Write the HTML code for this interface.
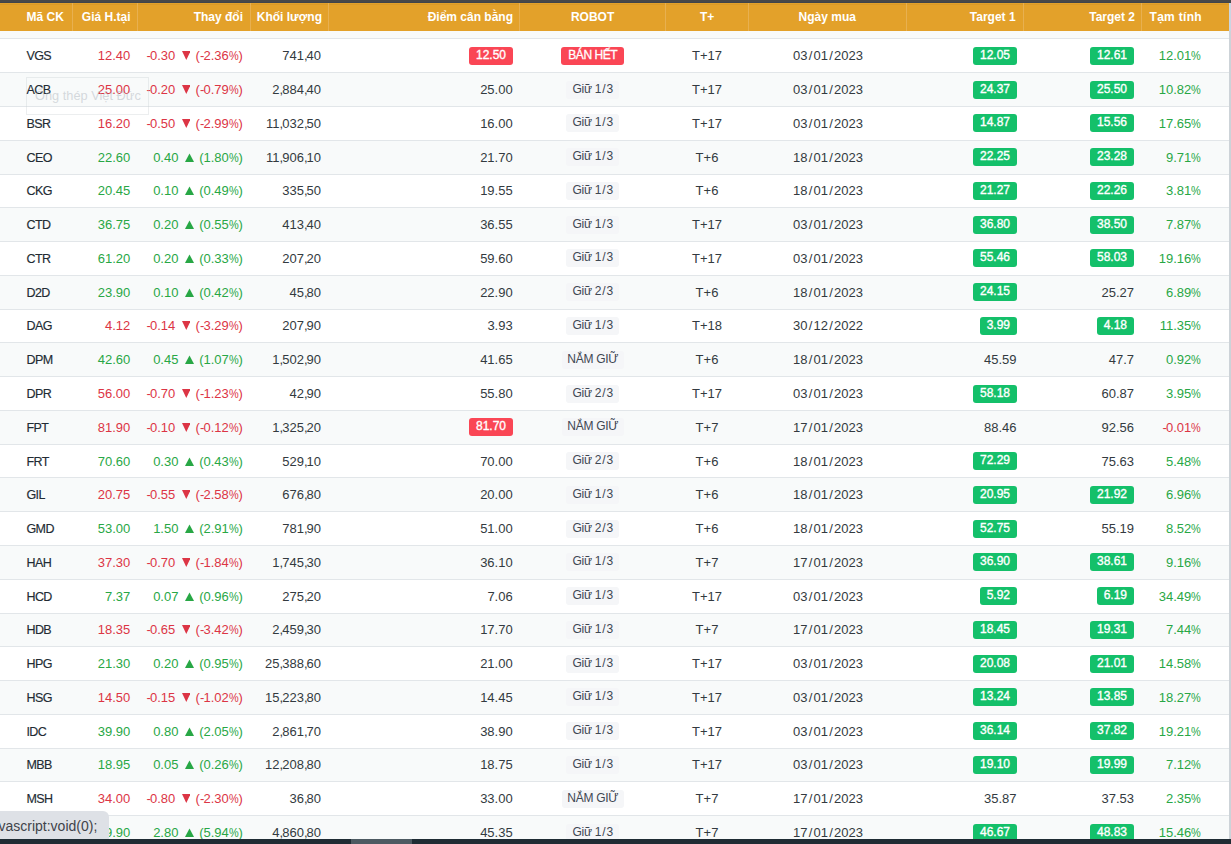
<!DOCTYPE html><html><head><meta charset="utf-8"><style>
*{margin:0;padding:0;box-sizing:border-box}
html,body{width:1231px;height:844px;overflow:hidden;background:#fff}
body{position:relative;font-family:"Liberation Sans",sans-serif;font-size:13px;color:#333a40}
.topbar{position:absolute;left:0;top:0;width:1231px;height:3px;background:#484848;border-bottom:1px solid #40444a}
.hline{position:absolute;left:0;top:1px;width:1229px;height:1px;background:#da9a28}
.hdr{position:absolute;left:0;top:3px;width:1229px;height:28px;background:#e3a12a}
.sep{position:absolute;top:0;width:1px;height:28px;background:#e8b050}
.h{position:absolute;top:0;height:28px;line-height:28px;color:#fff;font-weight:bold;font-size:12px;white-space:nowrap}
.band{position:absolute;left:0;top:31px;width:1229px;height:7px;background:#f8fafa}
.vscroll{position:absolute;left:1229px;top:31px;width:2px;height:808px;background:#cdd3d8}
.vs2{position:absolute;left:1229px;top:3px;width:2px;height:28px;background:#c9d5e1}
.row{position:absolute;left:0;width:1229px;border-top:1px solid #e2e6e9}
.row.alt{background:#f8fafa}
.c{position:absolute;white-space:nowrap;line-height:16px}
.r{color:#dc3545} .g{color:#28a745}
.code{color:#222b33;font-size:12.5px;letter-spacing:-0.6px;-webkit-text-stroke:0.15px #222b33}
.pc{display:inline-block;transform:scaleX(0.84);transform-origin:0 0;margin-right:-1.9px} .sl{margin:0 1.2px} .cm{letter-spacing:-1px} .hy{letter-spacing:-0.8px}
.tri{display:inline-block;margin:0 5.5px 0 6.2px;vertical-align:baseline;position:relative;top:0px}
.badge{position:absolute;height:18px;line-height:16px;border-radius:3px;color:#fff;font-size:12px;text-align:center;white-space:nowrap}
.nb{position:absolute;height:18px;line-height:16px;border-radius:3px;color:#fff;font-size:12px;white-space:nowrap;padding:0 7px;-webkit-text-stroke:0.35px #fff}
.nbw{position:absolute;width:200px;height:18px;text-align:right}
.nbw .nb{position:relative;display:inline-block}
.br{background:#fa4655} .bg{background:#14c06a}
.bgray{background:#f5f6f8;color:#3e4752;font-size:12px;letter-spacing:-0.3px;text-indent:0.3px}
.bottombar{position:absolute;left:0;top:839px;width:1231px;height:5px;background:#1f2c34}
.thumb{position:absolute;left:351px;top:0;width:61px;height:5px;background:#4d5a62}
.status{position:absolute;left:0;top:811px;width:109px;height:28px;background:#dee1e6;border-top-right-radius:6px;font-size:14px;color:#3e434a;line-height:30px;overflow:hidden;white-space:nowrap}
.tip{position:absolute;left:26px;top:77px;width:123px;height:38px;border:1px solid rgba(200,205,210,0.35);background:transparent;color:rgba(175,182,190,0.5);font-size:12.8px;line-height:36px;padding-left:8px;white-space:nowrap}
</style></head><body><div class="topbar"></div><div class="hdr"><div class="hline"></div><div class="sep" style="left:72px"></div><div class="sep" style="left:137px"></div><div class="sep" style="left:250px"></div><div class="sep" style="left:328px"></div><div class="sep" style="left:519px"></div><div class="sep" style="left:665px"></div><div class="sep" style="left:748px"></div><div class="sep" style="left:906px"></div><div class="sep" style="left:1023px"></div><div class="sep" style="left:1141px"></div><div class="h" style="left:26.5px">Mã CK</div><div class="h" style="left:-69.5px;width:200px;text-align:right">Giá H.tại</div><div class="h" style="left:43px;width:200px;text-align:right">Thay đổi</div><div class="h" style="left:122px;width:200px;text-align:right">Khối lượng</div><div class="h" style="left:313px;width:200px;text-align:right">Điểm cân bằng</div><div class="h" style="left:492.6px;width:200px;text-align:center">ROBOT</div><div class="h" style="left:607.2px;width:200px;text-align:center">T+</div><div class="h" style="left:727.3px;width:200px;text-align:center">Ngày mua</div><div class="h" style="left:815.6px;width:200px;text-align:right">Target 1</div><div class="h" style="left:935px;width:200px;text-align:right">Target 2</div><div class="h" style="left:1149.5px"><span style="letter-spacing:0.3px">Tạm tính</span></div></div><div class="band"></div><div class="row" style="top:38px;height:34px"><div class="c code" style="left:26.5px;top:9px">VGS</div><div class="c r" style="left:-69.69999999999999px;top:9px;width:200px;text-align:right">12.40</div><div class="c r" style="left:42.80000000000001px;top:9px;width:200px;text-align:right"><span class="hy">-</span>0.30<svg class="tri" width="8.6" height="9" viewBox="0 0 8.6 9"><polygon points="0,0 8.6,0 4.3,8.9" fill="#dc3545"/></svg>(<span class="hy">-</span>2.36<span class="pc">%</span>)</div><div class="c " style="left:121.0px;top:9px;width:200px;text-align:right">741<span class="cm">,</span>40</div><div class="nbw" style="left:313px;top:8px"><div class="nb br">12.50</div></div><div class="badge br" style="left:561px;top:8px;width:63px;letter-spacing:-0.45px;-webkit-text-stroke:0.3px #fff;text-indent:0.45px">BÁN HẾT</div><div class="c " style="left:607.0px;top:9px;width:200px;text-align:center">T+17</div><div class="c " style="left:728.0px;top:9px;width:200px;text-align:center">03<span class="sl">/</span>01<span class="sl">/</span>2023</div><div class="nbw" style="left:817px;top:8px"><div class="nb bg">12.05</div></div><div class="nbw" style="left:934px;top:8px"><div class="nb bg">12.61</div></div><div class="c g" style="left:1001.0px;top:9px;width:200px;text-align:right">12.01<span class="pc">%</span></div></div><div class="row alt" style="top:72px;height:34px"><div class="c code" style="left:26.5px;top:9px">ACB</div><div class="c r" style="left:-69.69999999999999px;top:9px;width:200px;text-align:right">25.00</div><div class="c r" style="left:42.80000000000001px;top:9px;width:200px;text-align:right"><span class="hy">-</span>0.20<svg class="tri" width="8.6" height="9" viewBox="0 0 8.6 9"><polygon points="0,0 8.6,0 4.3,8.9" fill="#dc3545"/></svg>(<span class="hy">-</span>0.79<span class="pc">%</span>)</div><div class="c " style="left:121.0px;top:9px;width:200px;text-align:right">2<span class="cm">,</span>884<span class="cm">,</span>40</div><div class="c " style="left:312.70000000000005px;top:9px;width:200px;text-align:right">25.00</div><div class="badge bgray" style="left:566.1px;top:8px;width:53px">Giữ 1<span class="sl">/</span>3</div><div class="c " style="left:607.0px;top:9px;width:200px;text-align:center">T+17</div><div class="c " style="left:728.0px;top:9px;width:200px;text-align:center">03<span class="sl">/</span>01<span class="sl">/</span>2023</div><div class="nbw" style="left:817px;top:8px"><div class="nb bg">24.37</div></div><div class="nbw" style="left:934px;top:8px"><div class="nb bg">25.50</div></div><div class="c g" style="left:1001.0px;top:9px;width:200px;text-align:right">10.82<span class="pc">%</span></div></div><div class="row" style="top:106px;height:34px"><div class="c code" style="left:26.5px;top:9px">BSR</div><div class="c r" style="left:-69.69999999999999px;top:9px;width:200px;text-align:right">16.20</div><div class="c r" style="left:42.80000000000001px;top:9px;width:200px;text-align:right"><span class="hy">-</span>0.50<svg class="tri" width="8.6" height="9" viewBox="0 0 8.6 9"><polygon points="0,0 8.6,0 4.3,8.9" fill="#dc3545"/></svg>(<span class="hy">-</span>2.99<span class="pc">%</span>)</div><div class="c " style="left:121.0px;top:9px;width:200px;text-align:right">11<span class="cm">,</span>032<span class="cm">,</span>50</div><div class="c " style="left:312.70000000000005px;top:9px;width:200px;text-align:right">16.00</div><div class="badge bgray" style="left:566.1px;top:7px;width:53px">Giữ 1<span class="sl">/</span>3</div><div class="c " style="left:607.0px;top:9px;width:200px;text-align:center">T+17</div><div class="c " style="left:728.0px;top:9px;width:200px;text-align:center">03<span class="sl">/</span>01<span class="sl">/</span>2023</div><div class="nbw" style="left:817px;top:7px"><div class="nb bg">14.87</div></div><div class="nbw" style="left:934px;top:7px"><div class="nb bg">15.56</div></div><div class="c g" style="left:1001.0px;top:9px;width:200px;text-align:right">17.65<span class="pc">%</span></div></div><div class="row alt" style="top:140px;height:34px"><div class="c code" style="left:26.5px;top:9px">CEO</div><div class="c g" style="left:-69.69999999999999px;top:9px;width:200px;text-align:right">22.60</div><div class="c g" style="left:42.80000000000001px;top:9px;width:200px;text-align:right">0.40<svg class="tri" width="9" height="9" viewBox="0 0 9 9"><polygon points="4.5,0.4 9,9 0,9" fill="#28a745"/></svg>(1.80<span class="pc">%</span>)</div><div class="c " style="left:121.0px;top:9px;width:200px;text-align:right">11<span class="cm">,</span>906<span class="cm">,</span>10</div><div class="c " style="left:312.70000000000005px;top:9px;width:200px;text-align:right">21.70</div><div class="badge bgray" style="left:566.1px;top:7px;width:53px">Giữ 1<span class="sl">/</span>3</div><div class="c " style="left:607.0px;top:9px;width:200px;text-align:center">T+6</div><div class="c " style="left:728.0px;top:9px;width:200px;text-align:center">18<span class="sl">/</span>01<span class="sl">/</span>2023</div><div class="nbw" style="left:817px;top:7px"><div class="nb bg">22.25</div></div><div class="nbw" style="left:934px;top:7px"><div class="nb bg">23.28</div></div><div class="c g" style="left:1001.0px;top:9px;width:200px;text-align:right">9.71<span class="pc">%</span></div></div><div class="row" style="top:174px;height:33px"><div class="c code" style="left:26.5px;top:8px">CKG</div><div class="c g" style="left:-69.69999999999999px;top:8px;width:200px;text-align:right">20.45</div><div class="c g" style="left:42.80000000000001px;top:8px;width:200px;text-align:right">0.10<svg class="tri" width="9" height="9" viewBox="0 0 9 9"><polygon points="4.5,0.4 9,9 0,9" fill="#28a745"/></svg>(0.49<span class="pc">%</span>)</div><div class="c " style="left:121.0px;top:8px;width:200px;text-align:right">335<span class="cm">,</span>50</div><div class="c " style="left:312.70000000000005px;top:8px;width:200px;text-align:right">19.55</div><div class="badge bgray" style="left:566.1px;top:7px;width:53px">Giữ 1<span class="sl">/</span>3</div><div class="c " style="left:607.0px;top:8px;width:200px;text-align:center">T+6</div><div class="c " style="left:728.0px;top:8px;width:200px;text-align:center">18<span class="sl">/</span>01<span class="sl">/</span>2023</div><div class="nbw" style="left:817px;top:7px"><div class="nb bg">21.27</div></div><div class="nbw" style="left:934px;top:7px"><div class="nb bg">22.26</div></div><div class="c g" style="left:1001.0px;top:8px;width:200px;text-align:right">3.81<span class="pc">%</span></div></div><div class="row alt" style="top:207px;height:34px"><div class="c code" style="left:26.5px;top:9px">CTD</div><div class="c g" style="left:-69.69999999999999px;top:9px;width:200px;text-align:right">36.75</div><div class="c g" style="left:42.80000000000001px;top:9px;width:200px;text-align:right">0.20<svg class="tri" width="9" height="9" viewBox="0 0 9 9"><polygon points="4.5,0.4 9,9 0,9" fill="#28a745"/></svg>(0.55<span class="pc">%</span>)</div><div class="c " style="left:121.0px;top:9px;width:200px;text-align:right">413<span class="cm">,</span>40</div><div class="c " style="left:312.70000000000005px;top:9px;width:200px;text-align:right">36.55</div><div class="badge bgray" style="left:566.1px;top:8px;width:53px">Giữ 1<span class="sl">/</span>3</div><div class="c " style="left:607.0px;top:9px;width:200px;text-align:center">T+17</div><div class="c " style="left:728.0px;top:9px;width:200px;text-align:center">03<span class="sl">/</span>01<span class="sl">/</span>2023</div><div class="nbw" style="left:817px;top:8px"><div class="nb bg">36.80</div></div><div class="nbw" style="left:934px;top:8px"><div class="nb bg">38.50</div></div><div class="c g" style="left:1001.0px;top:9px;width:200px;text-align:right">7.87<span class="pc">%</span></div></div><div class="row" style="top:241px;height:34px"><div class="c code" style="left:26.5px;top:9px">CTR</div><div class="c g" style="left:-69.69999999999999px;top:9px;width:200px;text-align:right">61.20</div><div class="c g" style="left:42.80000000000001px;top:9px;width:200px;text-align:right">0.20<svg class="tri" width="9" height="9" viewBox="0 0 9 9"><polygon points="4.5,0.4 9,9 0,9" fill="#28a745"/></svg>(0.33<span class="pc">%</span>)</div><div class="c " style="left:121.0px;top:9px;width:200px;text-align:right">207<span class="cm">,</span>20</div><div class="c " style="left:312.70000000000005px;top:9px;width:200px;text-align:right">59.60</div><div class="badge bgray" style="left:566.1px;top:7px;width:53px">Giữ 1<span class="sl">/</span>3</div><div class="c " style="left:607.0px;top:9px;width:200px;text-align:center">T+17</div><div class="c " style="left:728.0px;top:9px;width:200px;text-align:center">03<span class="sl">/</span>01<span class="sl">/</span>2023</div><div class="nbw" style="left:817px;top:7px"><div class="nb bg">55.46</div></div><div class="nbw" style="left:934px;top:7px"><div class="nb bg">58.03</div></div><div class="c g" style="left:1001.0px;top:9px;width:200px;text-align:right">19.16<span class="pc">%</span></div></div><div class="row alt" style="top:275px;height:34px"><div class="c code" style="left:26.5px;top:9px">D2D</div><div class="c g" style="left:-69.69999999999999px;top:9px;width:200px;text-align:right">23.90</div><div class="c g" style="left:42.80000000000001px;top:9px;width:200px;text-align:right">0.10<svg class="tri" width="9" height="9" viewBox="0 0 9 9"><polygon points="4.5,0.4 9,9 0,9" fill="#28a745"/></svg>(0.42<span class="pc">%</span>)</div><div class="c " style="left:121.0px;top:9px;width:200px;text-align:right">45<span class="cm">,</span>80</div><div class="c " style="left:312.70000000000005px;top:9px;width:200px;text-align:right">22.90</div><div class="badge bgray" style="left:566.1px;top:7px;width:53px">Giữ 2<span class="sl">/</span>3</div><div class="c " style="left:607.0px;top:9px;width:200px;text-align:center">T+6</div><div class="c " style="left:728.0px;top:9px;width:200px;text-align:center">18<span class="sl">/</span>01<span class="sl">/</span>2023</div><div class="nbw" style="left:817px;top:7px"><div class="nb bg">24.15</div></div><div class="c " style="left:934.0px;top:9px;width:200px;text-align:right">25.27</div><div class="c g" style="left:1001.0px;top:9px;width:200px;text-align:right">6.89<span class="pc">%</span></div></div><div class="row" style="top:309px;height:33px"><div class="c code" style="left:26.5px;top:8px">DAG</div><div class="c r" style="left:-69.69999999999999px;top:8px;width:200px;text-align:right">4.12</div><div class="c r" style="left:42.80000000000001px;top:8px;width:200px;text-align:right"><span class="hy">-</span>0.14<svg class="tri" width="8.6" height="9" viewBox="0 0 8.6 9"><polygon points="0,0 8.6,0 4.3,8.9" fill="#dc3545"/></svg>(<span class="hy">-</span>3.29<span class="pc">%</span>)</div><div class="c " style="left:121.0px;top:8px;width:200px;text-align:right">207<span class="cm">,</span>90</div><div class="c " style="left:312.70000000000005px;top:8px;width:200px;text-align:right">3.93</div><div class="badge bgray" style="left:566.1px;top:7px;width:53px">Giữ 1<span class="sl">/</span>3</div><div class="c " style="left:607.0px;top:8px;width:200px;text-align:center">T+18</div><div class="c " style="left:728.0px;top:8px;width:200px;text-align:center">30<span class="sl">/</span>12<span class="sl">/</span>2022</div><div class="nbw" style="left:817px;top:7px"><div class="nb bg">3.99</div></div><div class="nbw" style="left:934px;top:7px"><div class="nb bg">4.18</div></div><div class="c g" style="left:1001.0px;top:8px;width:200px;text-align:right">11.35<span class="pc">%</span></div></div><div class="row alt" style="top:342px;height:34px"><div class="c code" style="left:26.5px;top:9px">DPM</div><div class="c g" style="left:-69.69999999999999px;top:9px;width:200px;text-align:right">42.60</div><div class="c g" style="left:42.80000000000001px;top:9px;width:200px;text-align:right">0.45<svg class="tri" width="9" height="9" viewBox="0 0 9 9"><polygon points="4.5,0.4 9,9 0,9" fill="#28a745"/></svg>(1.07<span class="pc">%</span>)</div><div class="c " style="left:121.0px;top:9px;width:200px;text-align:right">1<span class="cm">,</span>502<span class="cm">,</span>90</div><div class="c " style="left:312.70000000000005px;top:9px;width:200px;text-align:right">41.65</div><div class="badge bgray" style="left:561.6px;top:8px;width:62px">NẮM GIỮ</div><div class="c " style="left:607.0px;top:9px;width:200px;text-align:center">T+6</div><div class="c " style="left:728.0px;top:9px;width:200px;text-align:center">18<span class="sl">/</span>01<span class="sl">/</span>2023</div><div class="c " style="left:816.5px;top:9px;width:200px;text-align:right">45.59</div><div class="c " style="left:934.0px;top:9px;width:200px;text-align:right">47.7</div><div class="c g" style="left:1001.0px;top:9px;width:200px;text-align:right">0.92<span class="pc">%</span></div></div><div class="row" style="top:376px;height:34px"><div class="c code" style="left:26.5px;top:9px">DPR</div><div class="c r" style="left:-69.69999999999999px;top:9px;width:200px;text-align:right">56.00</div><div class="c r" style="left:42.80000000000001px;top:9px;width:200px;text-align:right"><span class="hy">-</span>0.70<svg class="tri" width="8.6" height="9" viewBox="0 0 8.6 9"><polygon points="0,0 8.6,0 4.3,8.9" fill="#dc3545"/></svg>(<span class="hy">-</span>1.23<span class="pc">%</span>)</div><div class="c " style="left:121.0px;top:9px;width:200px;text-align:right">42<span class="cm">,</span>90</div><div class="c " style="left:312.70000000000005px;top:9px;width:200px;text-align:right">55.80</div><div class="badge bgray" style="left:566.1px;top:8px;width:53px">Giữ 2<span class="sl">/</span>3</div><div class="c " style="left:607.0px;top:9px;width:200px;text-align:center">T+17</div><div class="c " style="left:728.0px;top:9px;width:200px;text-align:center">03<span class="sl">/</span>01<span class="sl">/</span>2023</div><div class="nbw" style="left:817px;top:8px"><div class="nb bg">58.18</div></div><div class="c " style="left:934.0px;top:9px;width:200px;text-align:right">60.87</div><div class="c g" style="left:1001.0px;top:9px;width:200px;text-align:right">3.95<span class="pc">%</span></div></div><div class="row alt" style="top:410px;height:34px"><div class="c code" style="left:26.5px;top:9px">FPT</div><div class="c r" style="left:-69.69999999999999px;top:9px;width:200px;text-align:right">81.90</div><div class="c r" style="left:42.80000000000001px;top:9px;width:200px;text-align:right"><span class="hy">-</span>0.10<svg class="tri" width="8.6" height="9" viewBox="0 0 8.6 9"><polygon points="0,0 8.6,0 4.3,8.9" fill="#dc3545"/></svg>(<span class="hy">-</span>0.12<span class="pc">%</span>)</div><div class="c " style="left:121.0px;top:9px;width:200px;text-align:right">1<span class="cm">,</span>325<span class="cm">,</span>20</div><div class="nbw" style="left:313px;top:7px"><div class="nb br">81.70</div></div><div class="badge bgray" style="left:561.6px;top:7px;width:62px">NẮM GIỮ</div><div class="c " style="left:607.0px;top:9px;width:200px;text-align:center">T+7</div><div class="c " style="left:728.0px;top:9px;width:200px;text-align:center">17<span class="sl">/</span>01<span class="sl">/</span>2023</div><div class="c " style="left:816.5px;top:9px;width:200px;text-align:right">88.46</div><div class="c " style="left:934.0px;top:9px;width:200px;text-align:right">92.56</div><div class="c r" style="left:1001.0px;top:9px;width:200px;text-align:right"><span class="hy">-</span>0.01<span class="pc">%</span></div></div><div class="row" style="top:444px;height:33px"><div class="c code" style="left:26.5px;top:9px">FRT</div><div class="c g" style="left:-69.69999999999999px;top:9px;width:200px;text-align:right">70.60</div><div class="c g" style="left:42.80000000000001px;top:9px;width:200px;text-align:right">0.30<svg class="tri" width="9" height="9" viewBox="0 0 9 9"><polygon points="4.5,0.4 9,9 0,9" fill="#28a745"/></svg>(0.43<span class="pc">%</span>)</div><div class="c " style="left:121.0px;top:9px;width:200px;text-align:right">529<span class="cm">,</span>10</div><div class="c " style="left:312.70000000000005px;top:9px;width:200px;text-align:right">70.00</div><div class="badge bgray" style="left:566.1px;top:7px;width:53px">Giữ 2<span class="sl">/</span>3</div><div class="c " style="left:607.0px;top:9px;width:200px;text-align:center">T+6</div><div class="c " style="left:728.0px;top:9px;width:200px;text-align:center">18<span class="sl">/</span>01<span class="sl">/</span>2023</div><div class="nbw" style="left:817px;top:7px"><div class="nb bg">72.29</div></div><div class="c " style="left:934.0px;top:9px;width:200px;text-align:right">75.63</div><div class="c g" style="left:1001.0px;top:9px;width:200px;text-align:right">5.48<span class="pc">%</span></div></div><div class="row alt" style="top:477px;height:34px"><div class="c code" style="left:26.5px;top:9px">GIL</div><div class="c r" style="left:-69.69999999999999px;top:9px;width:200px;text-align:right">20.75</div><div class="c r" style="left:42.80000000000001px;top:9px;width:200px;text-align:right"><span class="hy">-</span>0.55<svg class="tri" width="8.6" height="9" viewBox="0 0 8.6 9"><polygon points="0,0 8.6,0 4.3,8.9" fill="#dc3545"/></svg>(<span class="hy">-</span>2.58<span class="pc">%</span>)</div><div class="c " style="left:121.0px;top:9px;width:200px;text-align:right">676<span class="cm">,</span>80</div><div class="c " style="left:312.70000000000005px;top:9px;width:200px;text-align:right">20.00</div><div class="badge bgray" style="left:566.1px;top:8px;width:53px">Giữ 1<span class="sl">/</span>3</div><div class="c " style="left:607.0px;top:9px;width:200px;text-align:center">T+6</div><div class="c " style="left:728.0px;top:9px;width:200px;text-align:center">18<span class="sl">/</span>01<span class="sl">/</span>2023</div><div class="nbw" style="left:817px;top:8px"><div class="nb bg">20.95</div></div><div class="nbw" style="left:934px;top:8px"><div class="nb bg">21.92</div></div><div class="c g" style="left:1001.0px;top:9px;width:200px;text-align:right">6.96<span class="pc">%</span></div></div><div class="row" style="top:511px;height:34px"><div class="c code" style="left:26.5px;top:9px">GMD</div><div class="c g" style="left:-69.69999999999999px;top:9px;width:200px;text-align:right">53.00</div><div class="c g" style="left:42.80000000000001px;top:9px;width:200px;text-align:right">1.50<svg class="tri" width="9" height="9" viewBox="0 0 9 9"><polygon points="4.5,0.4 9,9 0,9" fill="#28a745"/></svg>(2.91<span class="pc">%</span>)</div><div class="c " style="left:121.0px;top:9px;width:200px;text-align:right">781<span class="cm">,</span>90</div><div class="c " style="left:312.70000000000005px;top:9px;width:200px;text-align:right">51.00</div><div class="badge bgray" style="left:566.1px;top:8px;width:53px">Giữ 2<span class="sl">/</span>3</div><div class="c " style="left:607.0px;top:9px;width:200px;text-align:center">T+6</div><div class="c " style="left:728.0px;top:9px;width:200px;text-align:center">18<span class="sl">/</span>01<span class="sl">/</span>2023</div><div class="nbw" style="left:817px;top:8px"><div class="nb bg">52.75</div></div><div class="c " style="left:934.0px;top:9px;width:200px;text-align:right">55.19</div><div class="c g" style="left:1001.0px;top:9px;width:200px;text-align:right">8.52<span class="pc">%</span></div></div><div class="row alt" style="top:545px;height:34px"><div class="c code" style="left:26.5px;top:9px">HAH</div><div class="c r" style="left:-69.69999999999999px;top:9px;width:200px;text-align:right">37.30</div><div class="c r" style="left:42.80000000000001px;top:9px;width:200px;text-align:right"><span class="hy">-</span>0.70<svg class="tri" width="8.6" height="9" viewBox="0 0 8.6 9"><polygon points="0,0 8.6,0 4.3,8.9" fill="#dc3545"/></svg>(<span class="hy">-</span>1.84<span class="pc">%</span>)</div><div class="c " style="left:121.0px;top:9px;width:200px;text-align:right">1<span class="cm">,</span>745<span class="cm">,</span>30</div><div class="c " style="left:312.70000000000005px;top:9px;width:200px;text-align:right">36.10</div><div class="badge bgray" style="left:566.1px;top:7px;width:53px">Giữ 1<span class="sl">/</span>3</div><div class="c " style="left:607.0px;top:9px;width:200px;text-align:center">T+7</div><div class="c " style="left:728.0px;top:9px;width:200px;text-align:center">17<span class="sl">/</span>01<span class="sl">/</span>2023</div><div class="nbw" style="left:817px;top:7px"><div class="nb bg">36.90</div></div><div class="nbw" style="left:934px;top:7px"><div class="nb bg">38.61</div></div><div class="c g" style="left:1001.0px;top:9px;width:200px;text-align:right">9.16<span class="pc">%</span></div></div><div class="row" style="top:579px;height:34px"><div class="c code" style="left:26.5px;top:9px">HCD</div><div class="c g" style="left:-69.69999999999999px;top:9px;width:200px;text-align:right">7.37</div><div class="c g" style="left:42.80000000000001px;top:9px;width:200px;text-align:right">0.07<svg class="tri" width="9" height="9" viewBox="0 0 9 9"><polygon points="4.5,0.4 9,9 0,9" fill="#28a745"/></svg>(0.96<span class="pc">%</span>)</div><div class="c " style="left:121.0px;top:9px;width:200px;text-align:right">275<span class="cm">,</span>20</div><div class="c " style="left:312.70000000000005px;top:9px;width:200px;text-align:right">7.06</div><div class="badge bgray" style="left:566.1px;top:7px;width:53px">Giữ 1<span class="sl">/</span>3</div><div class="c " style="left:607.0px;top:9px;width:200px;text-align:center">T+17</div><div class="c " style="left:728.0px;top:9px;width:200px;text-align:center">03<span class="sl">/</span>01<span class="sl">/</span>2023</div><div class="nbw" style="left:817px;top:7px"><div class="nb bg">5.92</div></div><div class="nbw" style="left:934px;top:7px"><div class="nb bg">6.19</div></div><div class="c g" style="left:1001.0px;top:9px;width:200px;text-align:right">34.49<span class="pc">%</span></div></div><div class="row alt" style="top:613px;height:33px"><div class="c code" style="left:26.5px;top:8px">HDB</div><div class="c r" style="left:-69.69999999999999px;top:8px;width:200px;text-align:right">18.35</div><div class="c r" style="left:42.80000000000001px;top:8px;width:200px;text-align:right"><span class="hy">-</span>0.65<svg class="tri" width="8.6" height="9" viewBox="0 0 8.6 9"><polygon points="0,0 8.6,0 4.3,8.9" fill="#dc3545"/></svg>(<span class="hy">-</span>3.42<span class="pc">%</span>)</div><div class="c " style="left:121.0px;top:8px;width:200px;text-align:right">2<span class="cm">,</span>459<span class="cm">,</span>30</div><div class="c " style="left:312.70000000000005px;top:8px;width:200px;text-align:right">17.70</div><div class="badge bgray" style="left:566.1px;top:7px;width:53px">Giữ 1<span class="sl">/</span>3</div><div class="c " style="left:607.0px;top:8px;width:200px;text-align:center">T+7</div><div class="c " style="left:728.0px;top:8px;width:200px;text-align:center">17<span class="sl">/</span>01<span class="sl">/</span>2023</div><div class="nbw" style="left:817px;top:7px"><div class="nb bg">18.45</div></div><div class="nbw" style="left:934px;top:7px"><div class="nb bg">19.31</div></div><div class="c g" style="left:1001.0px;top:8px;width:200px;text-align:right">7.44<span class="pc">%</span></div></div><div class="row" style="top:646px;height:34px"><div class="c code" style="left:26.5px;top:9px">HPG</div><div class="c g" style="left:-69.69999999999999px;top:9px;width:200px;text-align:right">21.30</div><div class="c g" style="left:42.80000000000001px;top:9px;width:200px;text-align:right">0.20<svg class="tri" width="9" height="9" viewBox="0 0 9 9"><polygon points="4.5,0.4 9,9 0,9" fill="#28a745"/></svg>(0.95<span class="pc">%</span>)</div><div class="c " style="left:121.0px;top:9px;width:200px;text-align:right">25<span class="cm">,</span>388<span class="cm">,</span>60</div><div class="c " style="left:312.70000000000005px;top:9px;width:200px;text-align:right">21.00</div><div class="badge bgray" style="left:566.1px;top:8px;width:53px">Giữ 1<span class="sl">/</span>3</div><div class="c " style="left:607.0px;top:9px;width:200px;text-align:center">T+17</div><div class="c " style="left:728.0px;top:9px;width:200px;text-align:center">03<span class="sl">/</span>01<span class="sl">/</span>2023</div><div class="nbw" style="left:817px;top:8px"><div class="nb bg">20.08</div></div><div class="nbw" style="left:934px;top:8px"><div class="nb bg">21.01</div></div><div class="c g" style="left:1001.0px;top:9px;width:200px;text-align:right">14.58<span class="pc">%</span></div></div><div class="row alt" style="top:680px;height:34px"><div class="c code" style="left:26.5px;top:9px">HSG</div><div class="c r" style="left:-69.69999999999999px;top:9px;width:200px;text-align:right">14.50</div><div class="c r" style="left:42.80000000000001px;top:9px;width:200px;text-align:right"><span class="hy">-</span>0.15<svg class="tri" width="8.6" height="9" viewBox="0 0 8.6 9"><polygon points="0,0 8.6,0 4.3,8.9" fill="#dc3545"/></svg>(<span class="hy">-</span>1.02<span class="pc">%</span>)</div><div class="c " style="left:121.0px;top:9px;width:200px;text-align:right">15<span class="cm">,</span>223<span class="cm">,</span>80</div><div class="c " style="left:312.70000000000005px;top:9px;width:200px;text-align:right">14.45</div><div class="badge bgray" style="left:566.1px;top:7px;width:53px">Giữ 1<span class="sl">/</span>3</div><div class="c " style="left:607.0px;top:9px;width:200px;text-align:center">T+17</div><div class="c " style="left:728.0px;top:9px;width:200px;text-align:center">03<span class="sl">/</span>01<span class="sl">/</span>2023</div><div class="nbw" style="left:817px;top:7px"><div class="nb bg">13.24</div></div><div class="nbw" style="left:934px;top:7px"><div class="nb bg">13.85</div></div><div class="c g" style="left:1001.0px;top:9px;width:200px;text-align:right">18.27<span class="pc">%</span></div></div><div class="row" style="top:714px;height:34px"><div class="c code" style="left:26.5px;top:9px">IDC</div><div class="c g" style="left:-69.69999999999999px;top:9px;width:200px;text-align:right">39.90</div><div class="c g" style="left:42.80000000000001px;top:9px;width:200px;text-align:right">0.80<svg class="tri" width="9" height="9" viewBox="0 0 9 9"><polygon points="4.5,0.4 9,9 0,9" fill="#28a745"/></svg>(2.05<span class="pc">%</span>)</div><div class="c " style="left:121.0px;top:9px;width:200px;text-align:right">2<span class="cm">,</span>861<span class="cm">,</span>70</div><div class="c " style="left:312.70000000000005px;top:9px;width:200px;text-align:right">38.90</div><div class="badge bgray" style="left:566.1px;top:7px;width:53px">Giữ 1<span class="sl">/</span>3</div><div class="c " style="left:607.0px;top:9px;width:200px;text-align:center">T+17</div><div class="c " style="left:728.0px;top:9px;width:200px;text-align:center">03<span class="sl">/</span>01<span class="sl">/</span>2023</div><div class="nbw" style="left:817px;top:7px"><div class="nb bg">36.14</div></div><div class="nbw" style="left:934px;top:7px"><div class="nb bg">37.82</div></div><div class="c g" style="left:1001.0px;top:9px;width:200px;text-align:right">19.21<span class="pc">%</span></div></div><div class="row alt" style="top:748px;height:33px"><div class="c code" style="left:26.5px;top:8px">MBB</div><div class="c g" style="left:-69.69999999999999px;top:8px;width:200px;text-align:right">18.95</div><div class="c g" style="left:42.80000000000001px;top:8px;width:200px;text-align:right">0.05<svg class="tri" width="9" height="9" viewBox="0 0 9 9"><polygon points="4.5,0.4 9,9 0,9" fill="#28a745"/></svg>(0.26<span class="pc">%</span>)</div><div class="c " style="left:121.0px;top:8px;width:200px;text-align:right">12<span class="cm">,</span>208<span class="cm">,</span>80</div><div class="c " style="left:312.70000000000005px;top:8px;width:200px;text-align:right">18.75</div><div class="badge bgray" style="left:566.1px;top:7px;width:53px">Giữ 1<span class="sl">/</span>3</div><div class="c " style="left:607.0px;top:8px;width:200px;text-align:center">T+17</div><div class="c " style="left:728.0px;top:8px;width:200px;text-align:center">03<span class="sl">/</span>01<span class="sl">/</span>2023</div><div class="nbw" style="left:817px;top:7px"><div class="nb bg">19.10</div></div><div class="nbw" style="left:934px;top:7px"><div class="nb bg">19.99</div></div><div class="c g" style="left:1001.0px;top:8px;width:200px;text-align:right">7.12<span class="pc">%</span></div></div><div class="row" style="top:781px;height:34px"><div class="c code" style="left:26.5px;top:9px">MSH</div><div class="c r" style="left:-69.69999999999999px;top:9px;width:200px;text-align:right">34.00</div><div class="c r" style="left:42.80000000000001px;top:9px;width:200px;text-align:right"><span class="hy">-</span>0.80<svg class="tri" width="8.6" height="9" viewBox="0 0 8.6 9"><polygon points="0,0 8.6,0 4.3,8.9" fill="#dc3545"/></svg>(<span class="hy">-</span>2.30<span class="pc">%</span>)</div><div class="c " style="left:121.0px;top:9px;width:200px;text-align:right">36<span class="cm">,</span>80</div><div class="c " style="left:312.70000000000005px;top:9px;width:200px;text-align:right">33.00</div><div class="badge bgray" style="left:561.6px;top:8px;width:62px">NẮM GIỮ</div><div class="c " style="left:607.0px;top:9px;width:200px;text-align:center">T+7</div><div class="c " style="left:728.0px;top:9px;width:200px;text-align:center">17<span class="sl">/</span>01<span class="sl">/</span>2023</div><div class="c " style="left:816.5px;top:9px;width:200px;text-align:right">35.87</div><div class="c " style="left:934.0px;top:9px;width:200px;text-align:right">37.53</div><div class="c g" style="left:1001.0px;top:9px;width:200px;text-align:right">2.35<span class="pc">%</span></div></div><div class="row alt" style="top:815px;height:34px"><div class="c code" style="left:26.5px;top:9px">MWG</div><div class="c g" style="left:-69.69999999999999px;top:9px;width:200px;text-align:right">49.90</div><div class="c g" style="left:42.80000000000001px;top:9px;width:200px;text-align:right">2.80<svg class="tri" width="9" height="9" viewBox="0 0 9 9"><polygon points="4.5,0.4 9,9 0,9" fill="#28a745"/></svg>(5.94<span class="pc">%</span>)</div><div class="c " style="left:121.0px;top:9px;width:200px;text-align:right">4<span class="cm">,</span>860<span class="cm">,</span>80</div><div class="c " style="left:312.70000000000005px;top:9px;width:200px;text-align:right">45.35</div><div class="badge bgray" style="left:566.1px;top:8px;width:53px">Giữ 1<span class="sl">/</span>3</div><div class="c " style="left:607.0px;top:9px;width:200px;text-align:center">T+7</div><div class="c " style="left:728.0px;top:9px;width:200px;text-align:center">17<span class="sl">/</span>01<span class="sl">/</span>2023</div><div class="nbw" style="left:817px;top:8px"><div class="nb bg">46.67</div></div><div class="nbw" style="left:934px;top:8px"><div class="nb bg">48.83</div></div><div class="c g" style="left:1001.0px;top:9px;width:200px;text-align:right">15.46<span class="pc">%</span></div></div><div class="tip">Ống thép Việt Đức</div><div class="vscroll"></div><div class="vs2"></div><div class="status"><span style="margin-left:-1.5px">vascript:void(0);</span></div><div class="bottombar"><div class="thumb"></div></div></body></html>
